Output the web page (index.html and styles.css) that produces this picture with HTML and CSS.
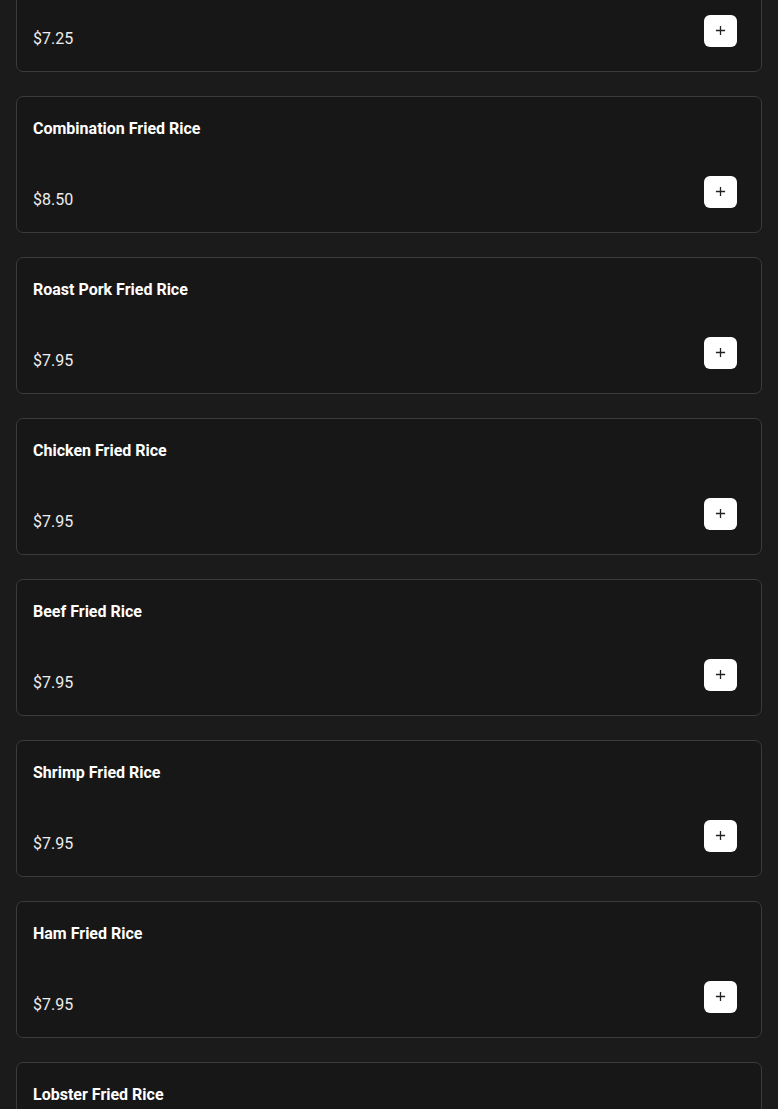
FILE: index.html
```html
<!DOCTYPE html>
<html>
<head>
<meta charset="utf-8">
<link rel="stylesheet" href="styles.css">
</head>
<body>
<div class="list">
  <div class="card">
    <div class="title"></div>
    <div class="row"><span class="price">$7.25</span><button class="add" aria-label="Add"><svg width="12" height="12" viewBox="0 0 12 12"><path d="M6 1v10M1 6h10" stroke="#222" stroke-width="1.4" fill="none"/></svg></button></div>
  </div>
  <div class="card">
    <div class="title">Combination Fried Rice</div>
    <div class="row"><span class="price">$8.50</span><button class="add" aria-label="Add"><svg width="12" height="12" viewBox="0 0 12 12"><path d="M6 1v10M1 6h10" stroke="#222" stroke-width="1.4" fill="none"/></svg></button></div>
  </div>
  <div class="card">
    <div class="title">Roast Pork Fried Rice</div>
    <div class="row"><span class="price">$7.95</span><button class="add" aria-label="Add"><svg width="12" height="12" viewBox="0 0 12 12"><path d="M6 1v10M1 6h10" stroke="#222" stroke-width="1.4" fill="none"/></svg></button></div>
  </div>
  <div class="card">
    <div class="title">Chicken Fried Rice</div>
    <div class="row"><span class="price">$7.95</span><button class="add" aria-label="Add"><svg width="12" height="12" viewBox="0 0 12 12"><path d="M6 1v10M1 6h10" stroke="#222" stroke-width="1.4" fill="none"/></svg></button></div>
  </div>
  <div class="card">
    <div class="title">Beef Fried Rice</div>
    <div class="row"><span class="price">$7.95</span><button class="add" aria-label="Add"><svg width="12" height="12" viewBox="0 0 12 12"><path d="M6 1v10M1 6h10" stroke="#222" stroke-width="1.4" fill="none"/></svg></button></div>
  </div>
  <div class="card">
    <div class="title">Shrimp Fried Rice</div>
    <div class="row"><span class="price">$7.95</span><button class="add" aria-label="Add"><svg width="12" height="12" viewBox="0 0 12 12"><path d="M6 1v10M1 6h10" stroke="#222" stroke-width="1.4" fill="none"/></svg></button></div>
  </div>
  <div class="card">
    <div class="title">Ham Fried Rice</div>
    <div class="row"><span class="price">$7.95</span><button class="add" aria-label="Add"><svg width="12" height="12" viewBox="0 0 12 12"><path d="M6 1v10M1 6h10" stroke="#222" stroke-width="1.4" fill="none"/></svg></button></div>
  </div>
  <div class="card">
    <div class="title">Lobster Fried Rice</div>
  </div>
</div>
</body>
</html>
```
FILE: styles.css
```css
html, body {
  margin: 0;
  padding: 0;
  background: #1b1b1b;
  font-family: Roboto, "Liberation Sans", sans-serif;
  overflow: hidden;
}
body {
  height: 1109px;
}
.list {
  display: flex;
  flex-direction: column;
  gap: 24px;
  padding: 0 16px;
  margin-top: -65px;
}
.card {
  background: #171717;
  border: 1px solid #3b3b3b;
  border-radius: 7px;
  padding: 20px 24px 24px 16px;
  box-sizing: border-box;
  height: 137px;
  flex-shrink: 0;
}
.title {
  color: #ffffff;
  font-size: 16px;
  font-weight: 700;
  line-height: 24px;
  min-height: 24px;
}
.row {
  display: flex;
  justify-content: space-between;
  align-items: flex-end;
  margin-top: 35px;
}
.price {
  color: #ededed;
  font-size: 16px;
  line-height: 20px;
  margin-bottom: -2px;
}
.add {
  width: 33px;
  height: 32px;
  border: none;
  border-radius: 6px;
  background: #ffffff;
  display: flex;
  align-items: center;
  justify-content: center;
  padding: 0;
}
.add svg {
  margin-top: -2px;
  width: 11px;
  height: 11px;
}
```
